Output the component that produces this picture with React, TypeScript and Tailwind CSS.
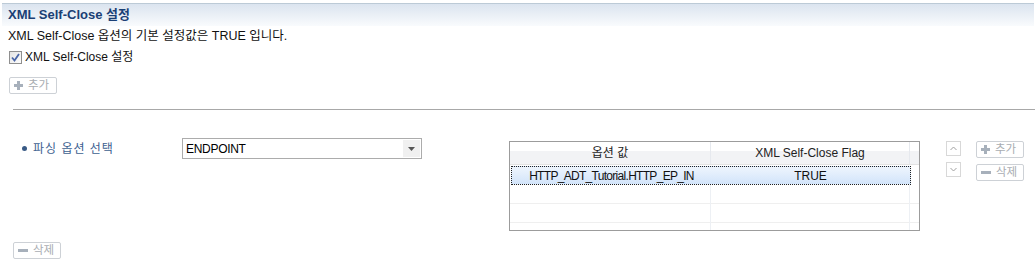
import React from "react";

const FONT = { fontFamily: '"Liberation Sans", "Noto Sans CJK KR", sans-serif' };

function PlusIcon() {
  return (
    <svg width="9" height="9" viewBox="0 0 9 9" className="shrink-0">
      <rect x="3" y="0" width="3" height="9" fill="#a7b0bb" />
      <rect x="0" y="3" width="9" height="3" fill="#a7b0bb" />
    </svg>
  );
}

function MinusIcon() {
  return (
    <svg width="10" height="9" viewBox="0 0 10 9" className="shrink-0">
      <rect x="0" y="3" width="10" height="3" fill="#a7b0bb" />
    </svg>
  );
}

function DisabledButton({ kind, label, className = "" }: { kind: "add" | "del"; label: string; className?: string }) {
  return (
    <div
      className={`flex items-center gap-[5px] h-[17px] w-[48px] border border-[#cdd1d6] rounded-[2px] bg-white pl-[4px] text-[11.5px] text-[#a9adb2] ${className}`}
    >
      {kind === "add" ? <PlusIcon /> : <MinusIcon />}
      <span className="leading-none">{label}</span>
    </div>
  );
}

function ArrowButton({ up }: { up: boolean }) {
  return (
    <div className="w-[15px] h-[15px] border border-[#d8d8d8] bg-white flex items-center justify-center">
      <svg width="7" height="5" viewBox="0 0 7 5">
        {up ? (
          <polyline points="0.5,4 3.5,1 6.5,4" fill="none" stroke="#a0a0a0" strokeWidth="1" />
        ) : (
          <polyline points="0.5,1 3.5,4 6.5,1" fill="none" stroke="#a0a0a0" strokeWidth="1" />
        )}
      </svg>
    </div>
  );
}

export default function App() {
  return (
    <div className="w-[1035px] h-[267px] bg-white overflow-hidden text-[12px] text-black" style={FONT}>
      {/* header */}
      <div className="pt-[3px] pl-[2px] pr-[1px]">
        <div className="h-[23px] border-t border-[#bccad6] bg-gradient-to-b from-[#dbe4ef] to-[#f9fbfd] flex items-center pl-[6px]">
          <span className="font-bold text-[13px] text-[#1a3f75]">XML Self-Close 설정</span>
        </div>
      </div>
      <div className="h-[20px] flex items-center pl-[8px] text-[12.5px] text-[#111]">
        XML Self-Close 옵션의 기본 설정값은 TRUE 입니다.
      </div>
      <div className="mt-[3px] h-[16px] flex items-center pl-[9px] gap-[3px]">
        <div className="w-[13px] h-[13px] border border-[#8f8f8f] bg-gradient-to-br from-[#e4e4e4] to-[#fdfdfd] flex items-center justify-center">
          <svg width="9" height="9" viewBox="0 0 9 9">
            <polyline points="1,4.5 3.5,7.5 8,1" fill="none" stroke="#4a66a8" strokeWidth="1.8" />
          </svg>
        </div>
        <span className="text-[12px] text-[#111]">XML Self-Close 설정</span>
      </div>
      <div className="mt-[12px] pl-[9px]">
        <DisabledButton kind="add" label="추가" />
      </div>
      <div className="mt-[15px] ml-[13px] h-px bg-[#a8a8a8]" />

      {/* main section */}
      <div className="mt-[28px] flex items-start pl-[22px]">
        <div className="w-[160px] h-[21px] flex items-center gap-[6px]">
          <span className="w-[5px] h-[5px] rounded-full bg-[#3a5b86]" />
          <span className="text-[12px] text-[#3d6190] tracking-[1px]">파싱 옵션 선택</span>
        </div>
        <div className="w-[240px] h-[21px] border border-[#acacac] bg-white flex items-center">
          <span className="flex-1 pl-[3px] text-[12px] tracking-[-0.3px] text-black">ENDPOINT</span>
          <div className="w-[17px] h-[17px] mr-[1px] bg-[#f0f0f0] flex items-center justify-center">
            <svg width="7" height="4" viewBox="0 0 7 4">
              <polygon points="0,0 7,0 3.5,4" fill="#555" />
            </svg>
          </div>
        </div>

        {/* table */}
        <div className="ml-[87px] mt-[3px] w-[411px] h-[90px] border border-[#9c9c9c] bg-white flex flex-col">
          <div className="h-[23px] flex border-b border-[#e3e3e3] bg-[linear-gradient(to_bottom,#ffffff_0%,#ffffff_40%,#f2f3f5_40%,#f2f3f5_100%)]">
            <div className="w-[201px] border-r border-[#e6e9ee] flex items-center justify-center text-[12px] text-[#222]">옵션 값</div>
            <div className="w-[199px] border-r border-[#e6e9ee] flex items-center justify-center text-[12px] text-[#222]">XML Self-Close Flag</div>
            <div className="flex-1" />
          </div>
          <div className="h-[20px] flex">
            <div className="w-[400px] ml-px mt-px h-[19px] border border-dotted border-[#222] bg-gradient-to-b from-[#eef5fd] to-[#d2e4fa] flex">
              <div className="w-[199px] flex items-center justify-center text-[12px] tracking-[-0.7px] text-[#111]">HTTP_ADT_Tutorial.HTTP_EP_IN</div>
              <div className="w-[199px] flex items-center justify-center text-[12px] text-[#111]">TRUE</div>
            </div>
            <div className="flex-1" />
          </div>
          <div className="flex-1 flex">
            <div className="w-[201px] border-r border-[#edf0f4] flex flex-col">
              <div className="h-[19px] border-b border-[#efefef]" />
              <div className="h-[19px] border-b border-[#efefef]" />
            </div>
            <div className="w-[199px] border-r border-[#edf0f4] flex flex-col">
              <div className="h-[19px] border-b border-[#efefef]" />
              <div className="h-[19px] border-b border-[#efefef]" />
            </div>
            <div className="flex-1 flex flex-col">
              <div className="h-[19px] border-b border-[#efefef]" />
              <div className="h-[19px] border-b border-[#efefef]" />
            </div>
          </div>
        </div>

        <div className="ml-[26px] mt-[3px] flex flex-col gap-[6px]">
          <ArrowButton up />
          <ArrowButton up={false} />
        </div>
        <div className="ml-[15px] mt-[3px] flex flex-col gap-[6px]">
          <DisabledButton kind="add" label="추가" />
          <DisabledButton kind="del" label="삭제" />
        </div>
      </div>

      <div className="mt-[11px] pl-[13px]">
        <DisabledButton kind="del" label="삭제" />
      </div>
    </div>
  );
}
